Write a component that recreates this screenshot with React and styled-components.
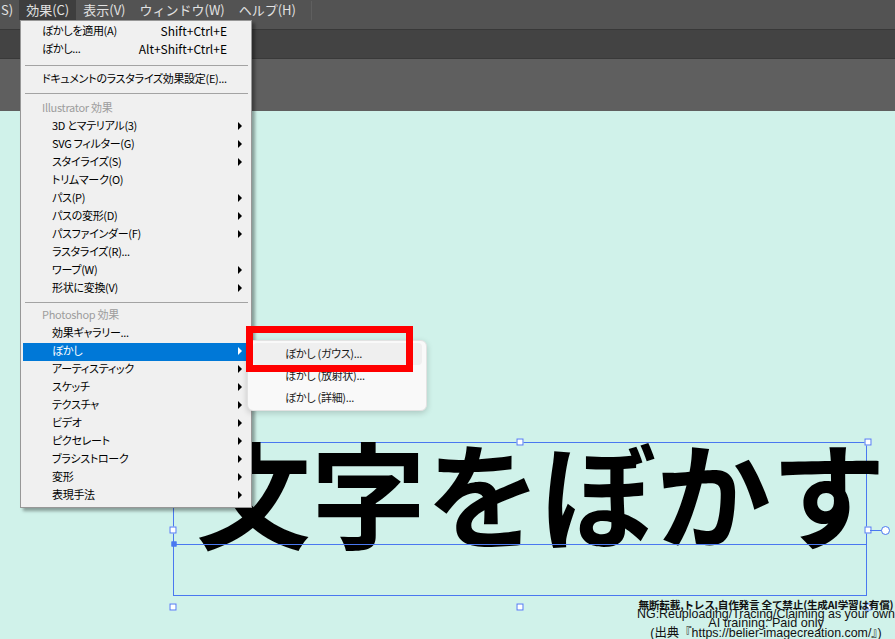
import React from 'react';
import styled, { createGlobalStyle } from 'styled-components';

const GlobalStyle = createGlobalStyle`
  html, body {
    margin: 0;
    padding: 0;
  }
  body {
    background: #d0f2ea;
    overflow: hidden;
  }
`;

const Window = styled.div`
  position: relative;
  width: 895px;
  height: 639px;
  display: flex;
  flex-direction: column;
  overflow: hidden;
  font-family: "Noto Sans CJK JP", sans-serif;
`;

const TopBar = styled.div`
  height: 29px;
  background: #535353;
  border-bottom: 1px solid #383838;
`;

const MenuBar = styled.nav`
  display: flex;
  height: 20px;
`;

const MenuBarItem = styled.div`
  padding: 0 7px 0 ${p => (p.$lead ? 1 : 7)}px;
  margin-right: ${p => (p.$lead ? -1 : 0)}px;
  font-size: 13px;
  line-height: 19px;
  color: #e2e2e2;
  background: ${p => (p.$active ? '#3e3e3e' : 'transparent')};
  white-space: nowrap;
`;

const MenuBarDivider = styled.div`
  width: 1px;
  height: 19px;
  margin: 1px 0 0 8px;
  background: #5f5f5f;
`;

const ControlBar = styled.div`
  height: 28px;
  background: #434343;
  border-bottom: 1px solid #393939;
`;

const PanelBar = styled.div`
  height: 52px;
  background: #5f5f5f;
`;

const Canvas = styled.div`
  position: relative;
  flex: 1;
  background: #d0f2ea;
`;

/* ---------- dropdown ---------- */

const Dropdown = styled.div`
  position: absolute;
  left: 20px;
  top: 20px;
  width: 232px;
  box-sizing: border-box;
  padding: 2px 1px 2px 2px;
  background: #f0f0f0;
  border: 1px solid #979797;
  box-shadow: 3px 3px 3px rgba(0, 0, 0, 0.35);
  font-size: 11px;
  letter-spacing: -0.3px;
  font-feature-settings: "palt";
  z-index: 5;
`;

const Row = styled.div`
  display: flex;
  align-items: center;
  box-sizing: border-box;
  height: 18px;
  padding: 0 8px 3px ${p => (p.$indent ? 29 : 19)}px;
  line-height: 15px;
  white-space: nowrap;
  color: ${p => (p.$active ? '#ffffff' : p.$muted ? '#9d9d9d' : '#000000')};
  background: ${p => (p.$active ? '#0078d7' : 'transparent')};
`;

const Label = styled.span`
  flex: 1;
`;

const Shortcut = styled.span`
  margin-right: 15px;
  font-size: 12px;
  letter-spacing: 0;
  font-feature-settings: normal;
`;

const Arrow = styled.span`
  width: 0;
  height: 0;
  border-left: 4px solid ${p => (p.$light ? '#ffffff' : '#000000')};
  border-top: 4px solid transparent;
  border-bottom: 4px solid transparent;
`;

const Separator = styled.hr`
  border: 0;
  height: 1px;
  background: #a3a3a3;
  margin: ${p => p.$top}px 2px ${p => p.$bottom}px 2px;
`;

const Submenu = styled.div`
  position: absolute;
  left: 247px;
  top: 340px;
  width: 180px;
  box-sizing: border-box;
  padding: 2px 4px 1px 5px;
  background: #f9f9f9;
  border: 1px solid #e2e2e2;
  border-radius: 6px;
  box-shadow: 0 2px 6px rgba(0, 0, 0, 0.18);
  font-size: 11px;
  letter-spacing: -0.3px;
  font-feature-settings: "palt";
  z-index: 6;
`;

const SubRow = styled.div`
  height: 22px;
  line-height: 21px;
  padding-left: 32px;
  border-radius: 4px;
  color: #1a1a1a;
  background: ${p => (p.$hover ? '#efefef' : 'transparent')};
  white-space: nowrap;
`;

const Callout = styled.div`
  position: absolute;
  left: 246px;
  top: 326px;
  width: 167px;
  height: 46px;
  box-sizing: border-box;
  border: 7px solid #ff0000;
  z-index: 7;
`;

/* ---------- canvas objects ---------- */

const TextObject = styled.div`
  position: absolute;
  left: 173px;
  top: 331px;
  width: 694px;
  height: 154px;
  box-sizing: border-box;
  border: 1px solid #4a78f0;
`;

const BigText = styled.div`
  margin: -10px 0 0 22px;
  font-family: "Noto Sans CJK JP", sans-serif;
  font-weight: 700;
  font-size: 115px;
  line-height: 1;
  color: #000;
  white-space: nowrap;
`;

const Baseline = styled.div`
  position: absolute;
  left: -1px;
  right: -1px;
  top: 101px;
  height: 1px;
  background: #4a78f0;
`;

const Handle = styled.span`
  position: absolute;
  width: 7px;
  height: 7px;
  box-sizing: border-box;
  background: ${p => (p.$filled ? '#4a78f0' : '#ffffff')};
  border: 1px solid #4a78f0;
  transform: translate(-50%, -50%);
`;

const RotateStem = styled.span`
  position: absolute;
  left: 696px;
  top: 87px;
  width: 12px;
  height: 1px;
  background: #4a78f0;
`;

const RotateKnob = styled.span`
  position: absolute;
  left: 707px;
  top: 83px;
  width: 9px;
  height: 9px;
  box-sizing: border-box;
  border: 1px solid #4a78f0;
  border-radius: 50%;
  background: #ffffff;
`;

const Watermark = styled.div`
  position: absolute;
  left: 636px;
  top: 489px;
  width: 260px;
  text-align: center;
  font-family: "Liberation Sans", "Noto Sans CJK JP", sans-serif;
  line-height: 9.5px;
  color: #111;
  white-space: nowrap;
`;

const WatermarkLine = styled.div`
  font-size: ${p => p.$size}px;
  font-weight: ${p => (p.$bold ? 700 : 400)};
  font-family: ${p => (p.$cjk ? '"Noto Sans CJK JP", sans-serif' : 'inherit')};
  letter-spacing: ${p => p.$track || 0}px;
`;

const MENU = [
  { label: 'ぼかしを適用(A)', shortcut: 'Shift+Ctrl+E' },
  { label: 'ぼかし...', shortcut: 'Alt+Shift+Ctrl+E' },
  { sep: [6, 5] },
  { label: 'ドキュメントのラスタライズ効果設定(E)...' },
  { sep: [4, 6] },
  { header: 'Illustrator 効果' },
  { label: '3D とマテリアル(3)', arrow: true },
  { label: 'SVG フィルター(G)', arrow: true },
  { label: 'スタイライズ(S)', arrow: true },
  { label: 'トリムマーク(O)' },
  { label: 'パス(P)', arrow: true },
  { label: 'パスの変形(D)', arrow: true },
  { label: 'パスファインダー(F)', arrow: true },
  { label: 'ラスタライズ(R)...' },
  { label: 'ワープ(W)', arrow: true },
  { label: '形状に変換(V)', arrow: true },
  { sep: [4, 4] },
  { header: 'Photoshop 効果' },
  { label: '効果ギャラリー...' },
  { label: 'ぼかし', arrow: true, active: true },
  { label: 'アーティスティック', arrow: true },
  { label: 'スケッチ', arrow: true },
  { label: 'テクスチャ', arrow: true },
  { label: 'ビデオ', arrow: true },
  { label: 'ピクセレート', arrow: true },
  { label: 'ブラシストローク', arrow: true },
  { label: '変形', arrow: true },
  { label: '表現手法', arrow: true },
];

const indentFrom = 6;

function EffectMenu() {
  return (
    <Dropdown>
      {MENU.map((item, i) => {
        if (item.sep) return <Separator key={i} $top={item.sep[0]} $bottom={item.sep[1]} />;
        if (item.header) return <Row key={i} $muted>{item.header}</Row>;
        return (
          <Row key={i} $indent={i >= indentFrom} $active={item.active}>
            <Label>{item.label}</Label>
            {item.shortcut && <Shortcut>{item.shortcut}</Shortcut>}
            {item.arrow && <Arrow $light={item.active} />}
          </Row>
        );
      })}
    </Dropdown>
  );
}

const handles = [
  [346, -1], [694, -1], [-1, 87], [694, 87],
  [-1, 164], [346, 164], [694, 164],
];

export default function App() {
  return (
    <>
      <GlobalStyle />
      <Window>
        <TopBar>
          <MenuBar>
            <MenuBarItem $lead>S)</MenuBarItem>
            <MenuBarItem $active>効果(C)</MenuBarItem>
            <MenuBarItem>表示(V)</MenuBarItem>
            <MenuBarItem>ウィンドウ(W)</MenuBarItem>
            <MenuBarItem>ヘルプ(H)</MenuBarItem>
            <MenuBarDivider />
          </MenuBar>
        </TopBar>
        <ControlBar />
        <PanelBar />
        <Canvas>
          <TextObject>
            <BigText>文字をぼかす</BigText>
            <Baseline />
            <Handle $filled style={{ left: 0, top: 101, width: 5, height: 5 }} />
            {handles.map(([x, y], i) => (
              <Handle key={i} style={{ left: x, top: y }} />
            ))}
            <RotateStem />
            <RotateKnob />
          </TextObject>
          <Watermark>
            <WatermarkLine $size={10.6} $bold $cjk $track={-0.2}>無断転載,トレス,自作発言 全て禁止(生成AI学習は有償)</WatermarkLine>
            <WatermarkLine $size={12.4}>NG:Reuploading/Tracing/Claiming as your own</WatermarkLine>
            <WatermarkLine $size={12.6}>AI training: Paid only</WatermarkLine>
            <WatermarkLine $size={12.4}>(出典『https://belier-imagecreation.com/』)</WatermarkLine>
          </Watermark>
        </Canvas>
        <EffectMenu />
        <Submenu>
          <SubRow $hover>ぼかし (ガウス)...</SubRow>
          <SubRow>ぼかし (放射状)...</SubRow>
          <SubRow>ぼかし (詳細)...</SubRow>
        </Submenu>
        <Callout />
      </Window>
    </>
  );
}
